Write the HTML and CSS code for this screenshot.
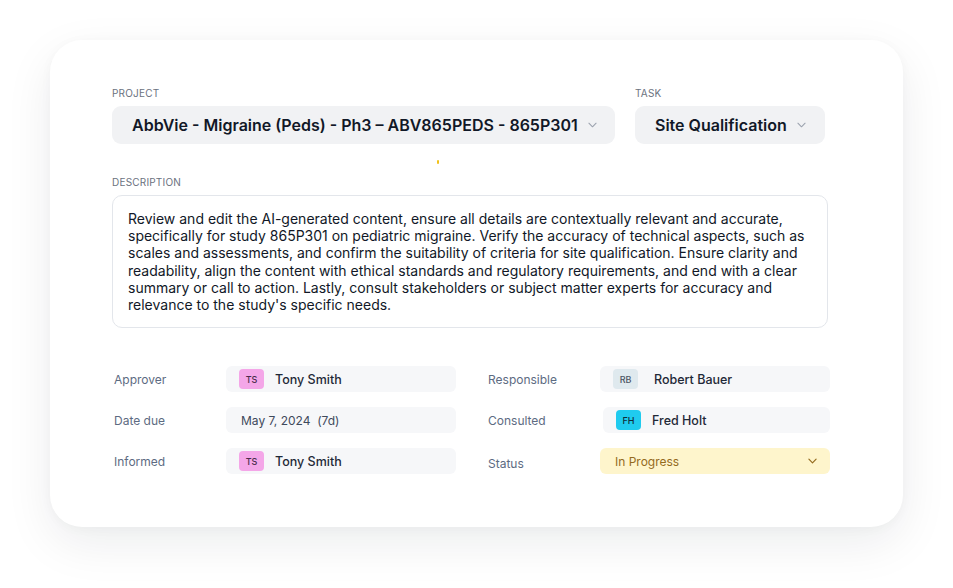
FILE: index.html
```html
<!DOCTYPE html>
<html lang="en">
<head>
<meta charset="utf-8">
<title>Task</title>
<link rel="stylesheet" href="styles.css">
</head>
<body>
<div class="card">
  <div class="top-row">
    <div class="field-group project">
      <div class="caps-label">PROJECT</div>
      <div class="select">
        <span>AbbVie - Migraine (Peds) - Ph3 – ABV865PEDS - 865P301</span>
        <svg class="chev" viewBox="0 0 10 6" width="9" height="6"><path d="M1 1l4 4 4-4" fill="none" stroke="currentColor" stroke-width="1.2" stroke-linecap="round" stroke-linejoin="round"/></svg>
      </div>
    </div>
    <div class="field-group task">
      <div class="caps-label">TASK</div>
      <div class="select">
        <span>Site Qualification</span>
        <svg class="chev" viewBox="0 0 10 6" width="9" height="6"><path d="M1 1l4 4 4-4" fill="none" stroke="currentColor" stroke-width="1.2" stroke-linecap="round" stroke-linejoin="round"/></svg>
      </div>
    </div>
  </div>
  <div class="dot-row"><span class="dot"></span></div>
  <div class="caps-label">DESCRIPTION</div>
  <div class="desc">Review and edit the AI-generated content, ensure all details are contextually relevant and accurate, specifically for study 865P301 on pediatric migraine. Verify the accuracy of technical aspects, such as scales and assessments, and confirm the suitability of criteria for site qualification. Ensure clarity and readability, align the content with ethical standards and regulatory requirements, and end with a clear summary or call to action. Lastly, consult stakeholders or subject matter experts for accuracy and relevance to the study's specific needs.</div>
  <div class="props">
    <div class="prop-col left">
      <div class="prop">
        <div class="prop-label">Approver</div>
        <div class="prop-value"><span class="avatar pink">TS</span><span class="name">Tony Smith</span></div>
      </div>
      <div class="prop">
        <div class="prop-label">Date due</div>
        <div class="prop-value date">May 7, 2024&nbsp;&nbsp;(7d)</div>
      </div>
      <div class="prop">
        <div class="prop-label">Informed</div>
        <div class="prop-value"><span class="avatar pink">TS</span><span class="name">Tony Smith</span></div>
      </div>
    </div>
    <div class="prop-col right">
      <div class="prop">
        <div class="prop-label">Responsible</div>
        <div class="prop-value"><span class="avatar grey">RB</span><span class="name wide">Robert Bauer</span></div>
      </div>
      <div class="prop">
        <div class="prop-label">Consulted</div>
        <div class="prop-value shifted"><span class="avatar cyan">FH</span><span class="name">Fred Holt</span></div>
      </div>
      <div class="prop">
        <div class="prop-label low">Status</div>
        <div class="prop-value status"><span>In Progress</span>
          <svg class="chev" viewBox="0 0 10 6" width="9" height="6"><path d="M1 1l4 4 4-4" fill="none" stroke="currentColor" stroke-width="1.3" stroke-linecap="round" stroke-linejoin="round"/></svg>
        </div>
      </div>
    </div>
  </div>
</div>
</body>
</html>
```
FILE: styles.css
```css
* { box-sizing: border-box; }
html, body { margin: 0; padding: 0; background: #ffffff; }
body {
  font-family: Inter, "Noto Sans", "Liberation Sans", sans-serif;
  padding: 40px 0 0 50px;
  min-height: 588px;
}
.card {
  width: 853px;
  height: 487px;
  background: #ffffff;
  border-radius: 32px;
  box-shadow: 0 16px 48px rgba(15, 23, 42, 0.08), 0 2px 12px rgba(15, 23, 42, 0.03);
  padding: 47px 75px 0 62px;
}
.top-row { display: flex; gap: 20px; }
.field-group.project { width: 503px; }
.field-group.task { width: 190px; }
.caps-label {
  font-size: 10px;
  line-height: 12px;
  color: #6b7280;
  letter-spacing: 0.2px;
  margin-bottom: 7px;
}
.select {
  height: 38px;
  background: #f1f2f4;
  border-radius: 9px;
  display: flex;
  align-items: center;
  padding: 0 20px;
  gap: 10px;
  font-size: 16px;
  font-weight: 600;
  color: #111827;
  white-space: nowrap;
}
.chev { color: #9ca3af; flex: none; }
.dot-row { height: 32px; padding: 16px 0 0 325px; }
.dot { display: block; width: 2px; height: 4px; background: #f2c21b; border-radius: 1px; }
.desc {
  width: 716px;
  height: 133px;
  border: 1px solid #e3e6eb;
  border-radius: 10px;
  padding: 14px 14px 0 15px;
  font-size: 14px;
  line-height: 17.2px;
  color: #111827;
}
.props {
  display: flex;
  gap: 32px;
  margin-top: 38px;
  padding-left: 2px;
}
.prop-col { display: flex; flex-direction: column; gap: 15px; width: 342px; }
.prop { display: flex; align-items: center; height: 26px; }
.prop-label { width: 112px; font-size: 12px; color: #5d6b82; }
.prop-label.low { padding-top: 4px; }
.prop-value {
  width: 230px;
  height: 26px;
  background: #f6f7f9;
  border-radius: 6px;
  display: flex;
  align-items: center;
  padding: 0 13px;
  font-size: 12px;
  color: #1f2937;
}
.prop-value.shifted { margin-left: 3px; width: 227px; }
.avatar {
  width: 25px;
  height: 20px;
  border-radius: 4px;
  font-size: 9px;
  font-weight: 500;
  display: flex;
  align-items: center;
  justify-content: center;
  margin-right: 11px;
  flex: none;
}
.avatar.pink { background: #f4a6e8; color: #4a2b4c; }
.avatar.grey { background: #dfe9ee; color: #4b5563; }
.avatar.cyan { background: #1fcbef; color: #0f2c3a; }
.name { font-weight: 500; font-size: 12.5px; color: #1f2937; }
.name.wide { margin-left: 5px; }
.prop-value.date { color: #3f4a5c; padding-left: 15px; }
.prop-value.status {
  background: #fef5cc;
  color: #946b1e;
  justify-content: space-between;
  padding: 0 13px 0 15px;
}
.prop-value.status .chev { color: #946b1e; }
```
